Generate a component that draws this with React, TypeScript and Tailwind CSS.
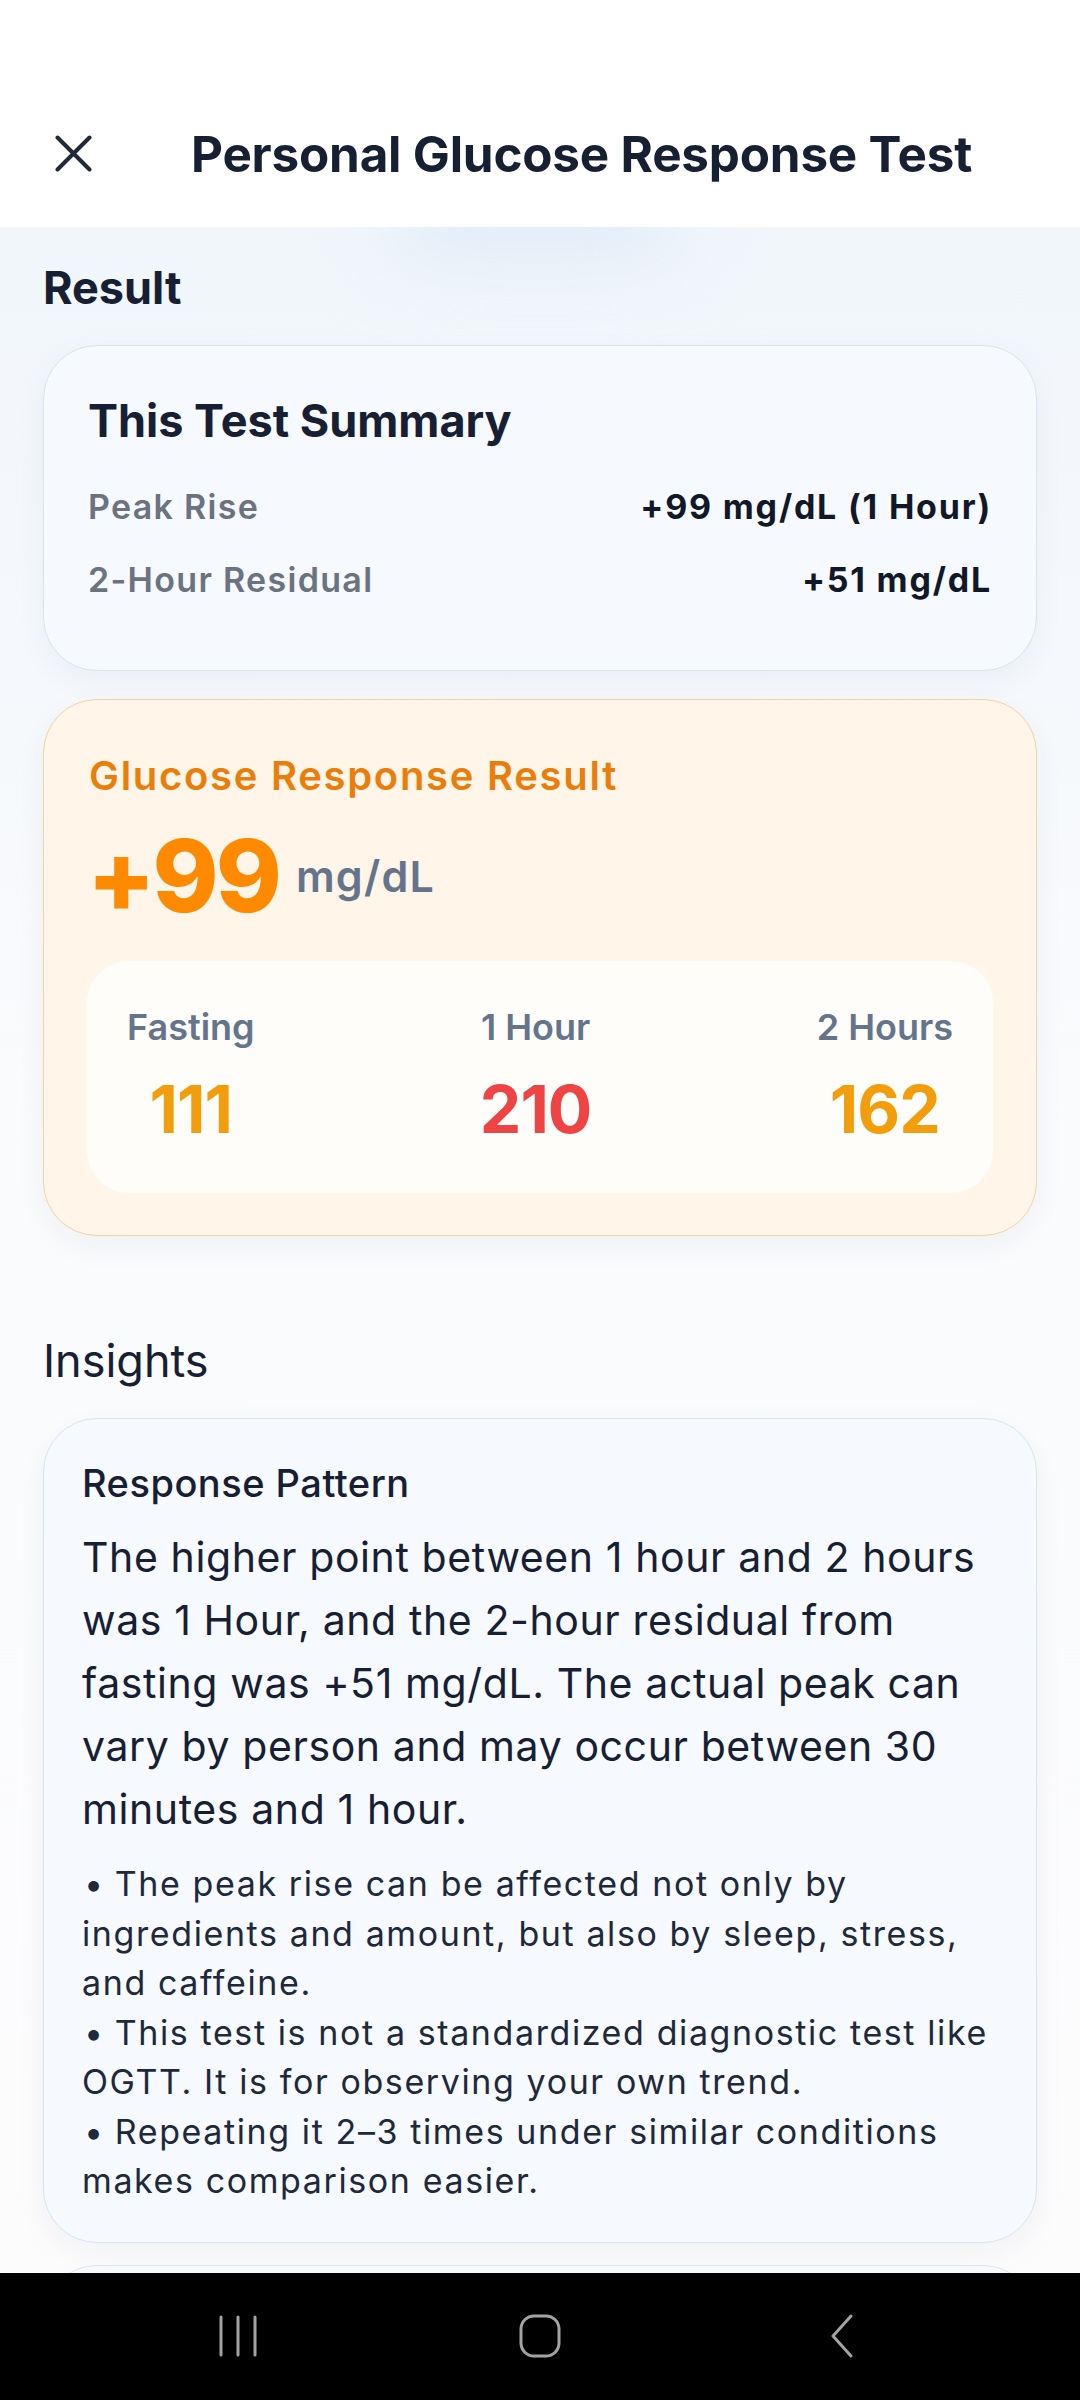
import React from 'react';

const font = { fontFamily: 'Inter, "Noto Sans", Arial, sans-serif' };

const readings = [
  { label: 'Fasting', value: '111', color: 'text-[#f29e0c]' },
  { label: '1 Hour', value: '210', color: 'text-[#ef4444]' },
  { label: '2 Hours', value: '162', color: 'text-[#f29e0c]' },
];

const bullets = [
  'The peak rise can be affected not only by ingredients and amount, but also by sleep, stress, and caffeine.',
  'This test is not a standardized diagnostic test like OGTT. It is for observing your own trend.',
  'Repeating it 2–3 times under similar conditions makes comparison easier.',
];

const SummaryRow: React.FC<{ label: string; value: string }> = ({ label, value }) => (
  <div className="flex items-center justify-between text-[34px] leading-[48px]">
    <span className="font-semibold tracking-[1.3px] text-[#6b7280]">{label}</span>
    <span className="font-bold tracking-[1.8px] text-[#111827]">{value}</span>
  </div>
);

const NavBar = () => (
  <div className="flex h-[127px] shrink-0 items-center justify-center bg-black pb-[2px]">
    <div className="flex w-[302px] justify-center">
      <svg width="40" height="42" viewBox="0 0 40 42" fill="none" stroke="#a3a3a3" strokeWidth="3" strokeLinecap="round">
        <path d="M3 2v38M20 2v38M37 2v38" />
      </svg>
    </div>
    <div className="flex w-[302px] justify-center">
      <svg width="42" height="44" viewBox="0 0 42 44" fill="none" stroke="#a3a3a3" strokeWidth="3">
        <rect x="2" y="2" width="38" height="40" rx="13" />
      </svg>
    </div>
    <div className="flex w-[302px] justify-center">
      <svg width="24" height="44" viewBox="0 0 24 44" fill="none" stroke="#a3a3a3" strokeWidth="3" strokeLinecap="round" strokeLinejoin="round">
        <path d="M21 2 3 22l18 20" />
      </svg>
    </div>
  </div>
);

export default function App() {
  return (
    <div className="flex h-[2400px] w-[1080px] flex-col overflow-hidden bg-white" style={font}>
      {/* header */}
      <header className="relative z-10 flex h-[227px] shrink-0 items-center bg-white pt-[80px] pl-[55px]">
        <svg width="37" height="37" viewBox="0 0 37 37" fill="none" stroke="#1f2937" strokeWidth="4" strokeLinecap="round">
          <path d="M2.5 2.5l32 32M34.5 2.5l-32 32" />
        </svg>
        <h1 className="ml-[99px] text-[49.4px] font-bold leading-[60px] tracking-[-0.2px] text-[#172033]">
          Personal Glucose Response Test
        </h1>
      </header>

      <main className="relative flex-1 overflow-hidden bg-linear-to-b from-[#f1f6fb] via-[#fafbfd] via-45% to-[#fcfcfd] px-[43px]">
        <div className="pointer-events-none absolute left-[390px] top-[-30px] h-[56px] w-[290px] rounded-full bg-[#dbe8f8] blur-2xl" />

        <h2 className="relative mt-[33px] text-[45px] font-bold leading-[56px] text-[#172033]">Result</h2>

        {/* summary card */}
        <section className="relative mt-[29px] rounded-[54px] border border-[#d8e4f3] bg-[#f6f9fd] px-[44px] pt-[47px] pb-[66px] shadow-[0_10px_30px_rgba(30,41,59,0.05)]">
          <h3 className="text-[45px] font-bold leading-[56px] text-[#172033]">This Test Summary</h3>
          <div className="mt-[34px] flex flex-col gap-[25px]">
            <SummaryRow label="Peak Rise" value="+99 mg/dL (1 Hour)" />
            <SummaryRow label="2-Hour Residual" value="+51 mg/dL" />
          </div>
        </section>

        {/* glucose response card */}
        <section className="relative mt-[28px] rounded-[54px] border border-[#f3d3a1] bg-[#fff5e9] px-[43px] pt-[51px] pb-[42px] shadow-[0_10px_30px_rgba(30,41,59,0.05)]">
          <h3 className="pl-[2px] text-[40px] font-semibold leading-[50px] tracking-[1.7px] text-[#ea7e0b]">Glucose Response Result</h3>
          <div className="mt-[25px] flex items-center gap-[17px]">
            <span className="text-[100px] font-extrabold leading-[100px] tracking-[-3px] text-[#ff8a00]">+99</span>
            <span className="text-[43px] font-semibold leading-[50px] tracking-[1.2px] text-[#64748b]">mg/dL</span>
          </div>
          <div className="mt-[35px] flex justify-between rounded-[42px] bg-[#fffdfa] px-[40px] pt-[44px] pb-[51px]">
            {readings.map((r) => (
              <div key={r.label} className="flex flex-col items-center">
                <span className="text-[36px] font-semibold leading-[44px] text-[#64748b]">{r.label}</span>
                <span className={`mt-[27px] text-[66px] font-bold leading-[66px] tracking-[-1px] ${r.color}`}>{r.value}</span>
              </div>
            ))}
          </div>
        </section>

        {/* insights */}
        <h2 className="relative mt-[97px] text-[45px] font-normal leading-[56px] text-[#172033]">Insights</h2>

        <section className="relative mt-[29px] rounded-[54px] border border-[#d8e4f3] bg-[#f6f9fd] px-[38px] pt-[41px] pb-[36px] shadow-[0_10px_30px_rgba(30,41,59,0.05)]">
          <h3 className="text-[38px] font-medium leading-[46px] tracking-[0.5px] text-[#172033]">Response Pattern</h3>
          <p className="mt-[20px] text-[41px] leading-[63px] tracking-[0.6px] text-[#172033]">
            The higher point between 1 hour and 2 hours was 1 Hour, and the 2-hour residual from fasting was +51 mg/dL. The actual peak can vary by person and may occur between 30 minutes and 1 hour.
          </p>
          <div className="mt-[18px] text-[34px] leading-[49.5px] tracking-[1.6px] text-[#1e293b]">
            {bullets.map((b) => (
              <p key={b}>
                <span className="mr-[10px] ml-[2px]">•</span>
                {b}
              </p>
            ))}
          </div>
        </section>

        <section className="relative mt-[22px] h-[200px] rounded-[54px] border border-[#d8e4f3] bg-[#f6f9fd]" />
      </main>

      <NavBar />
    </div>
  );
}
